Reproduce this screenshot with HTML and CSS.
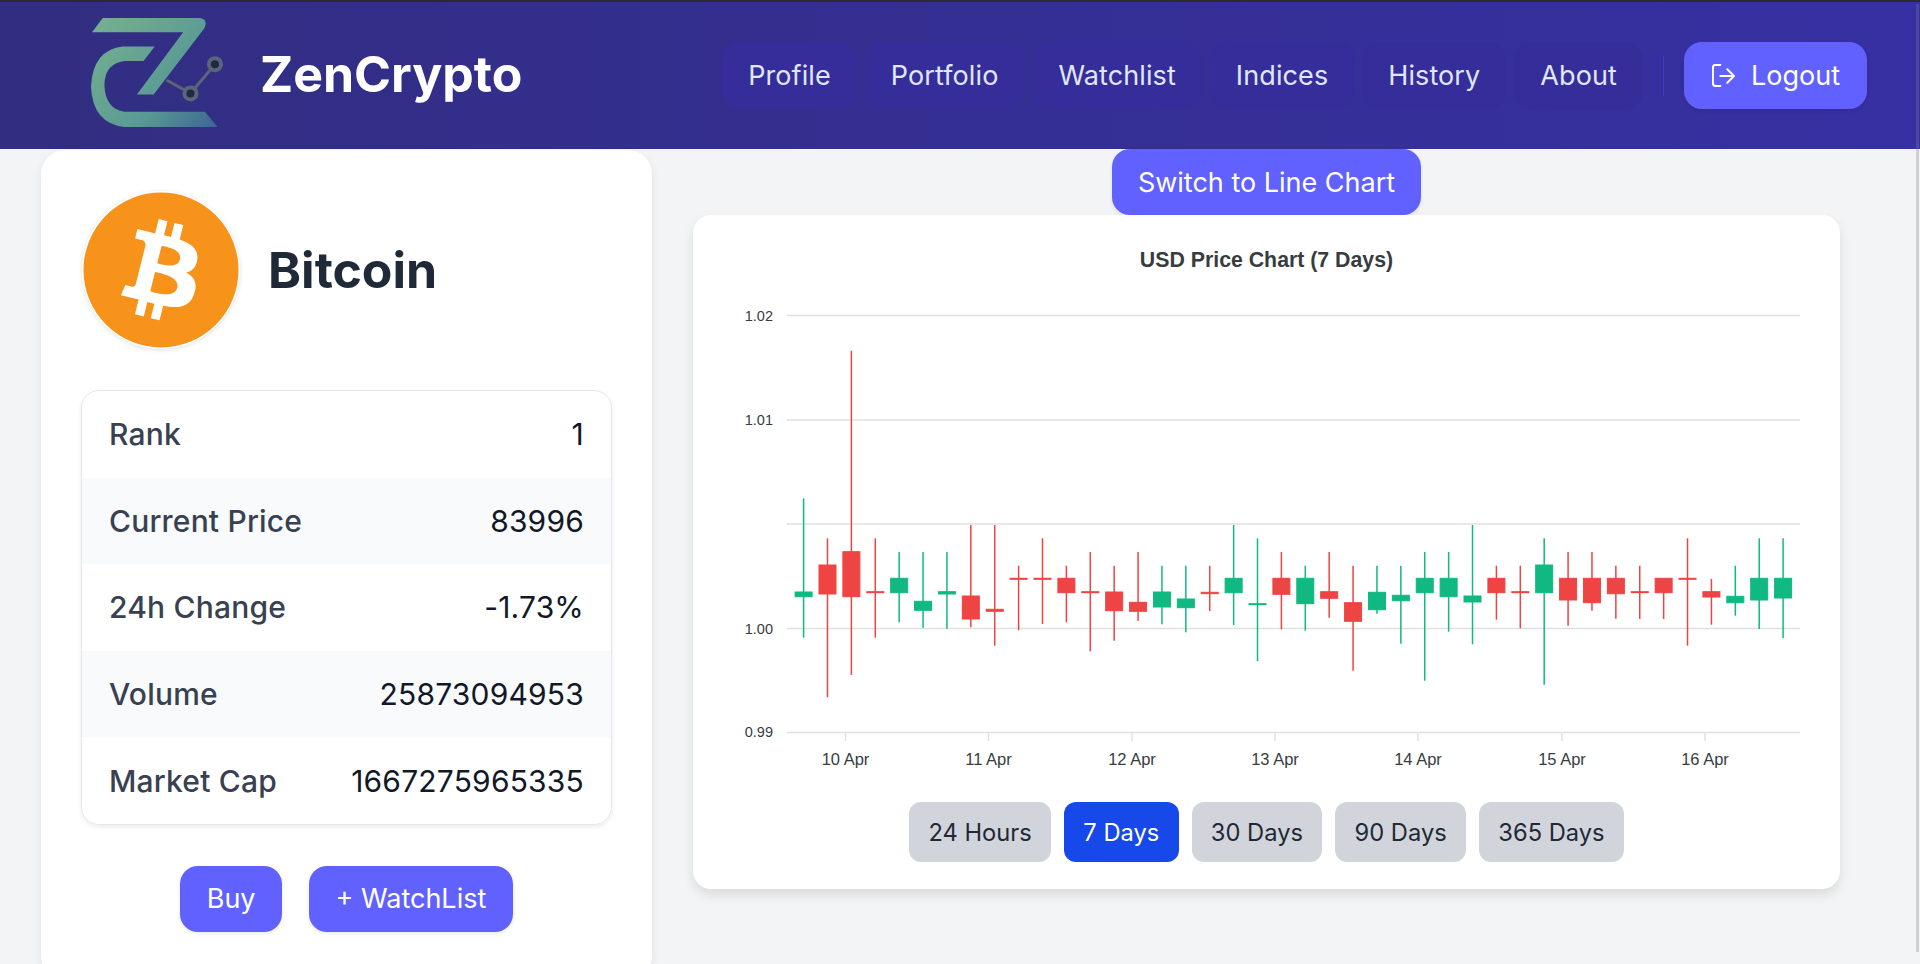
FILE: index.html
```html
<!DOCTYPE html>
<html lang="en">
<head>
    <meta charset="UTF-8">
    <meta name="viewport" content="width=device-width, initial-scale=1.0">
    <title>ZenCrypto - Bitcoin</title>
    <link rel="stylesheet" href="styles.css">
</head>
<body>
    <!-- Top navigation -->
    <header class="navbar">
        <a class="brand" href="#">
            <svg class="brand-logo" viewBox="35 40 397 325">
                <defs>
                    <linearGradient id="logoGrad" gradientUnits="userSpaceOnUse" x1="40" y1="60" x2="420" y2="370">
                        <stop offset="0" stop-color="#74b08f"/>
                        <stop offset="0.6" stop-color="#5a9a94"/>
                        <stop offset="1" stop-color="#3a6295"/>
                    </linearGradient>
                </defs>
                <path fill="url(#logoGrad)" d="M38 82 L70 40 H358 Q385 42 374 70 L222 268 H172 L310 82 Z"/>
                <path fill="url(#logoGrad)" d="M225 125 L192 168 H135 Q76 175 75 240 Q78 312 135 320 H375 L413 365 H135 Q40 355 35 245 Q40 135 130 125 Z"/>
                <path fill="none" stroke="#5b6478" stroke-width="9" d="M260 225 L332 265 L405 178"/>
                <circle cx="332" cy="265" r="24" fill="#5b6478"/>
                <circle cx="332" cy="265" r="12" fill="#1b2a45"/>
                <circle cx="405" cy="178" r="24" fill="#5b6478"/>
                <circle cx="405" cy="178" r="12" fill="#1b2a45"/>
            </svg>
            <span class="brand-name">ZenCrypto</span>
        </a>
        <nav class="nav-links">
            <a href="#">Profile</a>
            <a href="#">Portfolio</a>
            <a href="#">Watchlist</a>
            <a href="#">Indices</a>
            <a href="#">History</a>
            <a href="#">About</a>
            <span class="nav-divider"></span>
            <button class="btn logout-btn">
                <svg viewBox="0 0 23 23" fill="none" stroke="currentColor" stroke-width="2" stroke-linecap="round" stroke-linejoin="round">
                    <path d="M8.3 .9H3.6Q.9 .9 .9 3.8V19Q.9 22 3.8 22H8.3"/>
                    <path d="M8.3 12H22M15.3 5.3L22 12L15.3 18.7"/>
                </svg>
                Logout
            </button>
        </nav>
    </header>

    <main class="content">
        <!-- Coin details -->
        <section class="coin-card">
            <div class="coin-head">
                <svg class="coin-icon" viewBox="0 0 64 64">
                    <circle cx="32" cy="32" r="31.3" fill="#f7931a" stroke="#fff" stroke-width="0.6"/>
                    <path fill="#fff" transform="translate(0.4 0.45)" d="M46.11 27.441c.636-4.258-2.606-6.547-7.039-8.074l1.438-5.768-3.512-.875-1.4 5.616c-.922-.23-1.87-.447-2.812-.662l1.41-5.653-3.509-.875-1.439 5.766c-.764-.174-1.514-.346-2.242-.527l.004-.018-4.842-1.209-.934 3.75s2.605.597 2.55.634c1.422.355 1.68 1.296 1.636 2.042l-1.638 6.571c.098.025.225.061.365.117l-.37-.092-2.297 9.205c-.174.432-.615 1.08-1.609.834.035.051-2.552-.637-2.552-.637l-1.743 4.02 4.57 1.139c.85.213 1.683.436 2.502.646l-1.453 5.835 3.507.875 1.44-5.772c.957.26 1.887.5 2.797.726L27.504 50.8l3.511.875 1.453-5.823c5.987 1.133 10.49.676 12.383-4.738 1.527-4.36-.075-6.875-3.225-8.516 2.294-.531 4.022-2.04 4.483-5.157zM38.087 38.69c-1.086 4.36-8.426 2.004-10.807 1.412l1.928-7.729c2.38.594 10.011 1.77 8.88 6.317zm1.085-11.312c-.99 3.966-7.1 1.951-9.083 1.457l1.748-7.01c1.983.494 8.367 1.416 7.335 5.553z"/>
                </svg>
                <h1>Bitcoin</h1>
            </div>

            <div class="coin-stats">
                <div class="stat-row"><span>Rank</span><strong>1</strong></div>
                <div class="stat-row"><span>Current Price</span><strong>83996</strong></div>
                <div class="stat-row"><span>24h Change</span><strong>-1.73%</strong></div>
                <div class="stat-row"><span>Volume</span><strong>25873094953</strong></div>
                <div class="stat-row"><span>Market Cap</span><strong>1667275965335</strong></div>
            </div>

            <div class="coin-actions">
                <button class="btn">Buy</button>
                <button class="btn">+ WatchList</button>
            </div>
        </section>

        <!-- Price chart -->
        <section class="chart-column">
            <button class="btn switch-btn">Switch to Line Chart</button>
            <div class="chart-card">
                <svg id="priceChart" class="price-chart" viewBox="720 242 1093 536">
                    <text class="chart-title" x="1266.5" y="267">USD Price Chart (7 Days)</text>
                    <g class="grid">
                        <line x1="787" x2="1800" y1="315.5" y2="315.5"/>
                        <line x1="787" x2="1800" y1="420" y2="420"/>
                        <line x1="787" x2="1800" y1="524" y2="524"/>
                        <line x1="787" x2="1800" y1="628.5" y2="628.5"/>
                        <line x1="787" x2="1800" y1="732.5" y2="732.5"/>
                    </g>
                    <g class="y-labels">
                        <text x="773" y="321">1.02</text>
                        <text x="773" y="425">1.01</text>
                        <text x="773" y="634">1.00</text>
                        <text x="773" y="737">0.99</text>
                    </g>
                    <g class="grid">
                        <line x1="845.5" x2="845.5" y1="733" y2="741"/>
                        <line x1="988.5" x2="988.5" y1="733" y2="741"/>
                        <line x1="1132" x2="1132" y1="733" y2="741"/>
                        <line x1="1275" x2="1275" y1="733" y2="741"/>
                        <line x1="1418" x2="1418" y1="733" y2="741"/>
                        <line x1="1562" x2="1562" y1="733" y2="741"/>
                        <line x1="1705" x2="1705" y1="733" y2="741"/>
                    </g>
                    <g class="x-labels">
                        <text x="845.5" y="765">10 Apr</text>
                        <text x="988.5" y="765">11 Apr</text>
                        <text x="1132" y="765">12 Apr</text>
                        <text x="1275" y="765">13 Apr</text>
                        <text x="1418" y="765">14 Apr</text>
                        <text x="1562" y="765">15 Apr</text>
                        <text x="1705" y="765">16 Apr</text>
                    </g>
                </svg>
                <div class="range-buttons">
                    <button class="range-btn">24 Hours</button>
                    <button class="range-btn active">7 Days</button>
                    <button class="range-btn">30 Days</button>
                    <button class="range-btn">90 Days</button>
                    <button class="range-btn">365 Days</button>
                </div>
            </div>
        </section>
    </main>

    <!-- overlay scrollbar thumb -->
    <div class="scroll-thumb"></div>

    <script src="chart.js"></script>
</body>
</html>
```

FILE: styles.css
```css
* {
    box-sizing: border-box;
}

html, body {
    margin: 0;
    height: 964px;
    overflow: hidden;
}

body {
    font-family: Inter, "Liberation Sans", sans-serif;
    background-color: #f3f4f6;
    color: #1f2937;
}

a {
    color: inherit;
    text-decoration: none;
}

button {
    font-family: inherit;
    border: none;
    cursor: pointer;
}

/* navbar */
.navbar {
    display: flex;
    align-items: center;
    justify-content: space-between;
    height: 149px;
    padding: 0 53px 0 91px;
    background: linear-gradient(90deg, #312e81, #3730a3);
    border-top: 2px solid #2b2b2f;
}

.brand {
    display: flex;
    align-items: center;
    gap: 36px;
    margin-bottom: 6px;
}

.brand-logo {
    width: 133px;
    height: 109px;
}

.brand-name {
    margin-top: 2px;
    font-size: 50px;
    font-weight: 700;
    color: #fff;
}

.nav-links {
    display: flex;
    align-items: center;
    gap: 8px;
    font-size: 27px;
    letter-spacing: 0.1px;
    color: #e0e7ff;
}

.nav-links a {
    padding: 12.5px 26px;
    line-height: 42px;
    border-radius: 18px;
    background-color: #352d9a;
}

.nav-divider {
    width: 1px;
    height: 40px;
    margin: 0 12px;
    background-color: #4338ca;
}

.btn {
    height: 66px;
    padding: 0 26.5px;
    font-size: 27px;
    color: #fff;
    background-color: #6161ff;
    border-radius: 18px;
    box-shadow: 0 2px 4px rgba(0, 0, 0, 0.08);
}

.logout-btn {
    display: flex;
    align-items: center;
    gap: 16px;
    height: 67px;
    padding: 0 27px 0 28px;
}

.logout-btn svg {
    width: 23px;
    height: 23px;
}

/* page */
.content {
    display: flex;
    align-items: flex-start;
    padding: 1px 80px 0 41px;
    gap: 41px;
}

.coin-card {
    flex: 0 0 611px;
    height: 830px;
    padding: 40px;
    background-color: #fff;
    border-radius: 24px;
    box-shadow: 0 4px 10px rgba(0, 0, 0, 0.08);
}

.coin-head {
    display: flex;
    align-items: center;
    gap: 27px;
}

.coin-icon {
    width: 160px;
    height: 160px;
    filter: drop-shadow(0 1px 2px rgba(0, 0, 0, 0.12));
}

h1 {
    margin: 0;
    font-size: 50px;
    font-weight: 700;
    color: #1f2937;
}

.coin-stats {
    margin-top: 40px;
    border: 1px solid #e5e7eb;
    border-radius: 18px;
    overflow: hidden;
    box-shadow: 0 2px 4px rgba(0, 0, 0, 0.08);
}

.stat-row {
    display: flex;
    justify-content: space-between;
    align-items: center;
    height: 86.6px;
    padding: 0 27px;
    font-size: 30px;
    letter-spacing: 0.19px;
}

.stat-row:nth-child(even) {
    background-color: #f9fafb;
}

.stat-row span {
    font-weight: 500;
    color: #374151;
}

.stat-row strong {
    font-weight: 400;
    color: #111827;
}

.coin-actions {
    display: flex;
    justify-content: center;
    gap: 27px;
    margin-top: 41px;
}

/* chart */
.chart-column {
    flex: 1;
    display: flex;
    flex-direction: column;
    align-items: center;
}

.switch-btn {
    margin-top: -1px;
    padding: 0 26px;
    flex: none;
}

.chart-card {
    width: 1147px;
    height: 674px;
    padding: 27px;
    background-color: #fff;
    border-radius: 18px;
    box-shadow: 0 6px 12px rgba(0, 0, 0, 0.1);
}

.price-chart {
    display: block;
    width: 1093px;
    height: 536px;
    font-family: "Liberation Sans", Arial, sans-serif;
}

.chart-title {
    font-size: 21.3px;
    font-weight: 700;
    fill: #373d3f;
    text-anchor: middle;
}

.grid line {
    stroke: #e0e0e0;
    stroke-width: 1.5;
}

.y-labels text {
    font-size: 14.5px;
    fill: #373d3f;
    text-anchor: end;
}

.x-labels text {
    font-size: 16.5px;
    fill: #373d3f;
    text-anchor: middle;
}

.candle-up {
    fill: #10b981;
    stroke: #10b981;
}

.candle-down {
    fill: #ef4444;
    stroke: #ef4444;
}

.candle-up line, .candle-down line {
    stroke-width: 1.5;
}

.range-buttons {
    display: flex;
    justify-content: center;
    gap: 13px;
    margin-top: 24px;
}

.range-btn {
    height: 60px;
    padding: 0 19.3px;
    font-size: 23.7px;
    color: #1f2937;
    background-color: #d1d5db;
    border-radius: 12px;
}

.range-btn.active {
    color: #fff;
    background-color: #1648ea;
}

.scroll-thumb {
    position: absolute;
    top: 4px;
    right: 1px;
    width: 3px;
    height: 948px;
    background-color: rgba(128, 128, 128, 0.3);
}
```

FILE: chart.js
```js
// Candles as [wickTop, wickBottom, bodyTop, bodyBottom, direction], in page pixels
const candles = [
    [498.3, 637.7, 592, 596.7, 'up'],
    [538.3, 697.3, 565, 594, 'down'],
    [350.7, 675, 551.7, 596.7, 'down'],
    [538.3, 637.7, 591.7, 592.7, 'down'],
    [552, 622.3, 578.3, 592.7, 'up'],
    [552, 627.7, 601.3, 610.3, 'up'],
    [552, 628.7, 591.7, 594, 'up'],
    [525, 627.3, 596, 619, 'down'],
    [525, 645.7, 609.3, 611.3, 'down'],
    [565.7, 630.3, 578.3, 579.3, 'down'],
    [538.3, 624, 578.3, 579.3, 'down'],
    [565.7, 622.3, 578.3, 592.7, 'down'],
    [552, 651.3, 591.7, 592.7, 'down'],
    [565.7, 640.7, 592, 610.7, 'down'],
    [552, 621, 602.3, 611.3, 'down'],
    [565.7, 624.3, 592, 607, 'up'],
    [565.7, 632.3, 599, 607.7, 'up'],
    [565.7, 611, 592.3, 593.7, 'down'],
    [525, 625, 578.3, 592.7, 'up'],
    [538.3, 661, 603.7, 604.7, 'up'],
    [552, 629.3, 578.3, 594.3, 'down'],
    [565.7, 630.7, 578.3, 603.7, 'up'],
    [552, 617.7, 591.7, 598.3, 'down'],
    [565.7, 670.7, 602.7, 621.3, 'down'],
    [565.7, 613.7, 592.3, 609.7, 'up'],
    [565.7, 643.7, 595.3, 600.7, 'up'],
    [552, 680.7, 578.3, 592.7, 'up'],
    [552, 631.7, 578.3, 596.7, 'up'],
    [525, 644.3, 596, 602, 'up'],
    [565.7, 619.7, 578.3, 592.7, 'down'],
    [565.7, 628.3, 591.7, 592.7, 'down'],
    [538.3, 684.7, 565, 592.7, 'up'],
    [552, 625.7, 578.3, 600, 'down'],
    [552, 610.7, 578.3, 602.7, 'down'],
    [565.7, 618.7, 578.3, 593.7, 'down'],
    [565.7, 619, 591.7, 592.7, 'down'],
    [578.3, 619, 578.3, 592.7, 'down'],
    [538.3, 645.7, 578.3, 579.3, 'down'],
    [579, 624.7, 591.7, 597, 'down'],
    [565.7, 615.7, 596.3, 602.7, 'up'],
    [538.3, 629, 578.3, 600, 'up'],
    [538.3, 638.3, 578.3, 598, 'up']
];

const svg = document.getElementById('priceChart');
const SVG_NS = 'http://www.w3.org/2000/svg';

function addEl(parent, name, attrs) {
    const el = document.createElementNS(SVG_NS, name);
    Object.keys(attrs).forEach(key => el.setAttribute(key, attrs[key]));
    parent.appendChild(el);
    return el;
}

candles.forEach((c, i) => {
    const x = 803.6 + i * 23.89;
    const g = addEl(svg, 'g', { class: 'candle-' + c[4] });
    addEl(g, 'line', { x1: x, x2: x, y1: c[0], y2: c[1] });
    addEl(g, 'rect', { x: x - 8.5, y: c[2], width: 17, height: c[3] - c[2], 'stroke-width': 1 });
});
```
